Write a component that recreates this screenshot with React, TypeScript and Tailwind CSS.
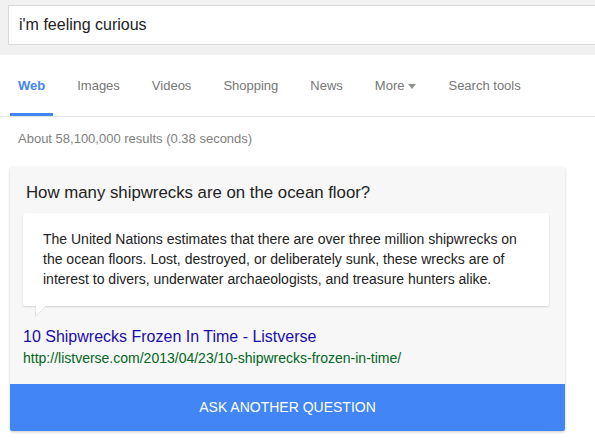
import React from "react";

const TABS = ["Web", "Images", "Videos", "Shopping", "News", "More", "Search tools"];

export default function App() {
  return (
    <div className="w-[595px] h-[446px] overflow-hidden bg-white font-['Liberation_Sans',Arial,sans-serif]">
      {/* Search bar band */}
      <div className="h-[55px] bg-[#f1f1f1] pt-[5px] pl-[8px]">
        <div className="h-[40px] bg-white border border-[#d9d9d9] border-r-0 flex items-center pl-[10px] text-[16px] text-[#222]">
          i'm feeling curious
        </div>
      </div>

      {/* Tabs */}
      <div className="h-[62px] border-b border-[#e5e5e5] flex items-end pl-[2px]">
        {TABS.map((t, i) => (
          <div
            key={t}
            className={
              i === 0
                ? "h-[61px] px-[8px] mx-[8px] flex items-center border-b-[3px] border-[#4285f4] text-[13px] font-bold text-[#4285f4] pt-[3px]"
                : "h-[61px] px-[8px] mx-[8px] flex items-center text-[13px] text-[#777]"
            }
          >
            {t}
            {t === "More" && (
              <svg width="8" height="5" viewBox="0 0 8 5" className="ml-[4px] mt-[1px]">
                <path d="M0 0h8L4 5z" fill="#909090" />
              </svg>
            )}
          </div>
        ))}
      </div>

      {/* Result stats */}
      <div className="pl-[18px] pt-[12px] text-[13px] text-[#808080] h-[50px]">
        About 58,100,000 results (0.38 seconds)
      </div>

      {/* Card */}
      <div className="ml-[10px] w-[555px] bg-[#f7f7f7] rounded-[2px] shadow-[0_1px_3px_rgba(0,0,0,0.2)]">
        <div className="pl-[13px] pr-[16px] pt-[16px] pb-[17px]">
          <div className="pl-[3px] text-[16.8px] text-[#222] leading-[20px]">
            How many shipwrecks are on the ocean floor?
          </div>
          <div className="relative mt-[10px] bg-white rounded-[2px] shadow-[0_1px_2px_rgba(0,0,0,0.15)] px-[20px] pt-[16px] pb-[17px] text-[14px] leading-[20px] text-[#222]">
            The United Nations estimates that there are over three million shipwrecks on the ocean floors. Lost, destroyed, or deliberately sunk, these wrecks are of interest to divers, underwater archaeologists, and treasure hunters alike.
            <svg
              width="14"
              height="12"
              viewBox="0 0 14 12"
              className="absolute left-[12px] bottom-[-11px]"
            >
              <path d="M0.5 0V11.5L12 0" fill="#fff" stroke="#e4e4e4" strokeWidth="1" />
              <path d="M1 0H12" stroke="#fff" strokeWidth="2" />
            </svg>
          </div>
          <div className="mt-[21px] text-[16px] text-[#1a0dab] leading-[20px]">
            10 Shipwrecks Frozen In Time - Listverse
          </div>
          <div className="mt-[2px] text-[14px] text-[#006621] leading-[18px]">
            http://listverse.com/2013/04/23/10-shipwrecks-frozen-in-time/
          </div>
        </div>
        <div className="h-[47px] bg-[#4285f4] rounded-b-[2px] flex items-center justify-center text-[14px] text-white">
          ASK ANOTHER QUESTION
        </div>
      </div>
    </div>
  );
}
